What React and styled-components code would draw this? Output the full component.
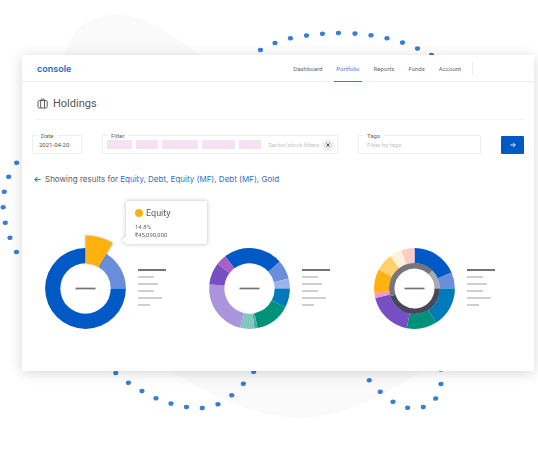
import React from "react";
import styled, { createGlobalStyle } from "styled-components";

const GlobalStyle = createGlobalStyle`
  *, *::before, *::after { box-sizing: border-box; }
  body {
    margin: 0;
    background: #fff;
    color: #5c5c5c;
    font-family: Inter, "Liberation Sans", sans-serif;
    overflow-x: hidden;
  }
  button, input { font: inherit; }
`;

const smallText = `
  font-family: Roboto, "Liberation Sans", sans-serif;
  font-size: 6px;
`;

const Scene = styled.div`
  position: relative;
  isolation: isolate;
  padding: 55px 4px 78px 22px;
`;

const Backdrop = styled.svg`
  position: absolute;
  inset: 0;
  z-index: -1;
  width: 100%;
  height: 100%;
`;

const Card = styled.section`
  min-height: 316px;
  background: #fff;
  border-radius: 3px;
  box-shadow: 0 2px 14px rgba(0, 0, 0, 0.16);
`;

const Header = styled.header`
  display: flex;
  align-items: stretch;
  height: 27px;
  padding: 0 61px 0 15px;
  border-bottom: 1px solid #eeeeee;
`;

const Logo = styled.a`
  display: flex;
  align-items: center;
  margin-right: auto;
  color: #1769cf;
  font-size: 9px;
  font-weight: 600;
  text-decoration: none;
`;

const Nav = styled.nav`
  display: flex;
  gap: 10px;
  padding-right: 9px;
`;

const NavLink = styled.a`
  display: flex;
  align-items: center;
  height: 27px;
  padding: 1px 2px 0;
  border-bottom: 1px solid ${(p) => (p.$active ? "#387ed1" : "transparent")};
  color: ${(p) => (p.$active ? "#387ed1" : "#666")};
  ${smallText}
  text-decoration: none;
`;

const Divider = styled.span`
  align-self: center;
  width: 1px;
  height: 13px;
  background: #eee;
`;

const TitleBar = styled.div`
  display: flex;
  align-items: center;
  gap: 5px;
  height: 38px;
  margin: 0 8px 0 13px;
  padding: 6px 0 0 2px;
  border-bottom: 1px solid #f4f4f4;
`;

const Title = styled.h1`
  margin: 0;
  font-family: Roboto, "Liberation Sans", sans-serif;
  font-size: 11px;
  font-weight: 400;
  line-height: 14px;
  color: #555;
`;

const Filters = styled.form`
  display: grid;
  grid-template-columns: 50px minmax(0, 236fr) minmax(0, 123fr) 23px;
  column-gap: 20px;
  align-items: end;
  padding: 12px 10px 0;
`;

const Field = styled.fieldset`
  display: flex;
  align-items: center;
  min-width: 0;
  height: 22px;
  margin: 0;
  padding: 0 4px 3px 4px;
  border: 1px solid #eeeeee;
  border-radius: 1px;
`;

const Legend = styled.legend`
  padding: 0 4px;
  color: #666;
  ${smallText}
  line-height: 7px;
`;

const FieldBody = styled.div`
  display: flex;
  align-items: center;
  gap: 4px;
  width: 100%;
  height: 13px;
`;

const TextInput = styled.input`
  flex: 1;
  min-width: 0;
  padding: 0 0 0 ${(p) => p.$inset || 0}px;
  border: 0;
  outline: 0;
  background: transparent;
  color: #555;
  ${smallText}
  line-height: 8px;
  text-align: ${(p) => p.$align || "left"};
  &::placeholder { color: #c4c4c4; opacity: 1; }
`;

const Chip = styled.span`
  flex: 0 1 ${(p) => p.$width}px;
  height: 9px;
  background: #f4e1f4;
`;

const ClearButton = styled.button`
  display: grid;
  place-items: center;
  flex: none;
  width: 10px;
  height: 10px;
  padding: 0;
  border: 0;
  border-radius: 50%;
  background: #e8e8e8;
`;

const SubmitButton = styled.button`
  display: grid;
  place-items: center;
  width: 23px;
  height: 18px;
  padding: 0;
  border: 0;
  border-radius: 1px;
  background: #0059c5;
`;

const Results = styled.p`
  display: flex;
  align-items: center;
  gap: 4px;
  margin: 0;
  padding: 19px 12px 0;
  color: #5c5c5c;
  font-size: 8px;
  line-height: 12px;
`;

const BackLink = styled.a`
  display: flex;
`;

const ResultLink = styled.a`
  color: #2f70c8;
  text-decoration: none;
`;

const Charts = styled.div`
  display: grid;
  grid-template-columns: repeat(3, minmax(0, 1fr));
  gap: 4px;
  padding: 63px 0 40px 23px;
`;

const ChartItem = styled.article`
  position: relative;
  display: flex;
  gap: 12px;
`;

const Donut = styled.svg`
  flex: none;
  width: 81px;
  height: 81px;
  overflow: visible;
`;

const Raised = styled.g`
  filter: drop-shadow(0 0 1px rgba(0, 0, 0, 0.3));
`;

const LineList = styled.div`
  display: flex;
  flex-direction: column;
  gap: 5px;
  padding-top: 21px;
`;

const Line = styled.span`
  width: ${(p) => p.$width}px;
  height: 2px;
  background: ${(p) => (p.$dark ? "#757575" : "#cfcfcf")};
`;

const Tooltip = styled.div`
  position: absolute;
  left: 81px;
  bottom: 85px;
  width: 81px;
  height: 43px;
  padding: 6px 9px;
  border-radius: 1px;
  background: #fff;
  filter: drop-shadow(0 0 2px rgba(0, 0, 0, 0.25));
  &::after {
    content: "";
    position: absolute;
    left: -4px;
    bottom: 0;
    border: solid transparent;
    border-width: 4px 4px 4px 0;
    border-right-color: #fff;
  }
`;

const TooltipTitle = styled.div`
  display: flex;
  align-items: center;
  gap: 3px;
  margin-bottom: 4px;
  font-family: Roboto, "Liberation Sans", sans-serif;
  font-size: 9px;
  line-height: 12px;
`;

const Swatch = styled.span`
  width: 8px;
  height: 8px;
  border-radius: 50%;
  background: #ffb20f;
`;

const TooltipValue = styled.div`
  color: #666;
  ${smallText}
  line-height: 8px;
`;

const DOTS = [
  [260.5, 50], [275, 43], [290.5, 38.3], [306.5, 35.5], [322.5, 33.8], [338.5, 33],
  [355, 33.6], [371, 35.2], [387, 38.3], [402.5, 42.6], [417.5, 48.5], [431.5, 55],
  [115.8, 373], [128.5, 382.7], [142, 391], [156, 398.2], [171, 403.6], [186.5, 407],
  [202.3, 408], [218, 404.2], [231.8, 395.3], [243.4, 383.7], [253.7, 371.8],
  [369.3, 380.3], [380.3, 391.7], [393, 401.7], [407.7, 407.8], [423.3, 407],
  [435.7, 398.5], [441, 384], [441, 369.5],
  [16.7, 162.8], [8.7, 176.7], [4.3, 191.7], [3.2, 207.3], [5.3, 222.7], [10, 237.7], [16.5, 252],
];

const point = (r, deg) => {
  const a = (deg * Math.PI) / 180;
  return `${(r * Math.sin(a)).toFixed(2)} ${(-r * Math.cos(a)).toFixed(2)}`;
};

function Slice({ from, to, inner = 25.2, outer = 40.4, color }) {
  const large = to - from > 180 ? 1 : 0;
  const d = `M${point(outer, from)}A${outer} ${outer} 0 ${large} 1 ${point(outer, to)}L${point(inner, to)}A${inner} ${inner} 0 ${large} 0 ${point(inner, from)}Z`;
  return <path d={d} fill={color} />;
}

const CHARTS = [
  {
    name: "Allocation by class",
    slices: [
      { from: 31, to: 90, color: "#698fdc" },
      { from: 90, to: 360, color: "#0059c5" },
    ],
    raised: { from: 0, to: 31, inner: 25, outer: 53, color: "#ffb20f" },
  },
  {
    name: "Allocation by sector",
    slices: [
      { from: -37, to: 48.5, color: "#0059c5" },
      { from: 48.5, to: 75.5, color: "#698fdc" },
      { from: 75.5, to: 90, color: "#9cb3e8" },
      { from: 90, to: 118, color: "#007ab8" },
      { from: 118, to: 168.5, color: "#00917a" },
      { from: 168.5, to: 173, color: "#4aac9b" },
      { from: 173, to: 193.5, color: "#80c8bd" },
      { from: 193.5, to: 276, color: "#aa94dc" },
      { from: 276, to: 308, color: "#764fc3" },
      { from: 308, to: 323, color: "#a95fc7" },
    ],
  },
  {
    name: "Allocation by stock",
    slices: [
      { from: 0, to: 66.5, color: "#0059c5" },
      { from: 66.5, to: 90, color: "#698fdc" },
      { from: 90, to: 147.5, color: "#007ab8" },
      { from: 147.5, to: 191, color: "#00917a" },
      { from: 191, to: 256.5, color: "#764fc3" },
      { from: 256.5, to: 264, color: "#f994c6" },
      { from: 264, to: 298, color: "#ffb20f" },
      { from: 298, to: 323.5, color: "#ffd16f" },
      { from: 323.5, to: 341, color: "#fff0dc" },
      { from: 341, to: 360, color: "#ffcbc5" },
      { from: 45, to: 90, inner: 20, outer: 25.4, color: "#a8a9b1" },
      { from: 90, to: 252, inner: 20, outer: 25.4, color: "#46475a" },
      { from: 252, to: 405, inner: 20, outer: 25.4, color: "#74757e" },
    ],
  },
];

const LINES = [16, 20, 16, 24, 12];
const NAV = ["Dashboard", "Portfolio", "Reports", "Funds", "Account"];
const CHIPS = [25, 22, 36, 33, 22];
const RESULTS = ["Equity", "Debt", "Equity (MF)", "Debt (MF)", "Gold"];

function Arrow({ size, color, left, width = 1.2 }) {
  return (
    <svg width={size} height={size} viewBox="0 0 8 8" fill="none" stroke={color} strokeWidth={width} aria-hidden="true">
      <path d={left ? "M7.5 4H1M3.8 1.2L1 4l2.8 2.8" : "M.5 4H7M4.2 1.2L7 4 4.2 6.8"} />
    </svg>
  );
}

function Chart({ name, slices, raised, children }) {
  return (
    <ChartItem>
      <Donut viewBox="-40.5 -40.5 81 81" role="img" aria-label={name}>
        {slices.map((s) => <Slice key={`${s.from}-${s.color}`} {...s} />)}
        {raised && <Raised><Slice {...raised} /></Raised>}
        <path d="M-10 0H10" stroke="#747474" strokeWidth="1.7" />
      </Donut>
      <LineList aria-hidden="true">
        <Line $width={28} $dark />
        {LINES.map((w, i) => <Line key={i} $width={w} />)}
      </LineList>
      {children}
    </ChartItem>
  );
}

export default function App() {
  return (
    <>
      <GlobalStyle />
      <Scene>
        <Backdrop viewBox="0 0 538 449" aria-hidden="true">
          <path
            d="M65 56C70 28 91 14 117 14.500C146 15 174 36 197 53L440 180L470 290C462 342 443 356 421 371C377 401 335 418 299 418C247 416 206 393 171 371L90 210Z"
            fill="#fafafa"
          />
          {DOTS.map(([x, y]) => (
            <ellipse key={`${x}-${y}`} cx={x} cy={y} rx="2.6" ry="2.3" fill="#387ed1" />
          ))}
        </Backdrop>
        <Card>
          <Header>
            <Logo href="#console">console</Logo>
            <Nav>
              {NAV.map((label) => (
                <NavLink key={label} href={`#${label}`} $active={label === "Portfolio"}>{label}</NavLink>
              ))}
            </Nav>
            <Divider />
          </Header>
          <TitleBar>
            <svg width="11" height="11" viewBox="0 0 11 11" fill="none" stroke="#5c5c5c" aria-hidden="true">
              <rect x="1" y="2.5" width="9.2" height="7.5" rx="1.4" />
              <path d="M3.700 10V2.300Q3.700 1 5 1H6.200Q7.500 1 7.500 2.300V10" />
            </svg>
            <Title>Holdings</Title>
          </TitleBar>
          <Filters onSubmit={(e) => e.preventDefault()}>
            <Field>
              <Legend><label htmlFor="date">Date</label></Legend>
              <FieldBody><TextInput id="date" defaultValue="2021-04-20" $inset={2} /></FieldBody>
            </Field>
            <Field>
              <Legend><label htmlFor="filter">Filter</label></Legend>
              <FieldBody>
                {CHIPS.map((w, i) => <Chip key={i} $width={w} />)}
                <TextInput id="filter" placeholder="Sector/stock filters" $align="right" />
                <ClearButton type="button" aria-label="Clear filters">
                  <svg width="4" height="4" viewBox="0 0 4 4" stroke="#555" aria-hidden="true">
                    <path d="M.5.5l3 3M3.500.5l-3 3" />
                  </svg>
                </ClearButton>
              </FieldBody>
            </Field>
            <Field>
              <Legend><label htmlFor="tags">Tags</label></Legend>
              <FieldBody><TextInput id="tags" placeholder="Filter by tags" $inset={4} /></FieldBody>
            </Field>
            <SubmitButton type="submit" aria-label="Apply"><Arrow size={6} color="#fff" /></SubmitButton>
          </Filters>
          <Results>
            <BackLink href="#back" aria-label="Back"><Arrow size={7} color="#387ed1" left /></BackLink>
            <span>
              Showing results for{" "}
              {RESULTS.map((r, i) => (
                <ResultLink key={r} href={`#${r}`}>{r}{i < RESULTS.length - 1 ? ", " : ""}</ResultLink>
              ))}
            </span>
          </Results>
          <Charts>
            {CHARTS.map((c, i) => (
              <Chart key={c.name} {...c}>
                {i === 0 && (
                  <Tooltip role="tooltip">
                    <TooltipTitle><Swatch />Equity</TooltipTitle>
                    <TooltipValue>14.8%</TooltipValue>
                    <TooltipValue>₹45,090,900</TooltipValue>
                  </Tooltip>
                )}
              </Chart>
            ))}
          </Charts>
        </Card>
      </Scene>
    </>
  );
}
